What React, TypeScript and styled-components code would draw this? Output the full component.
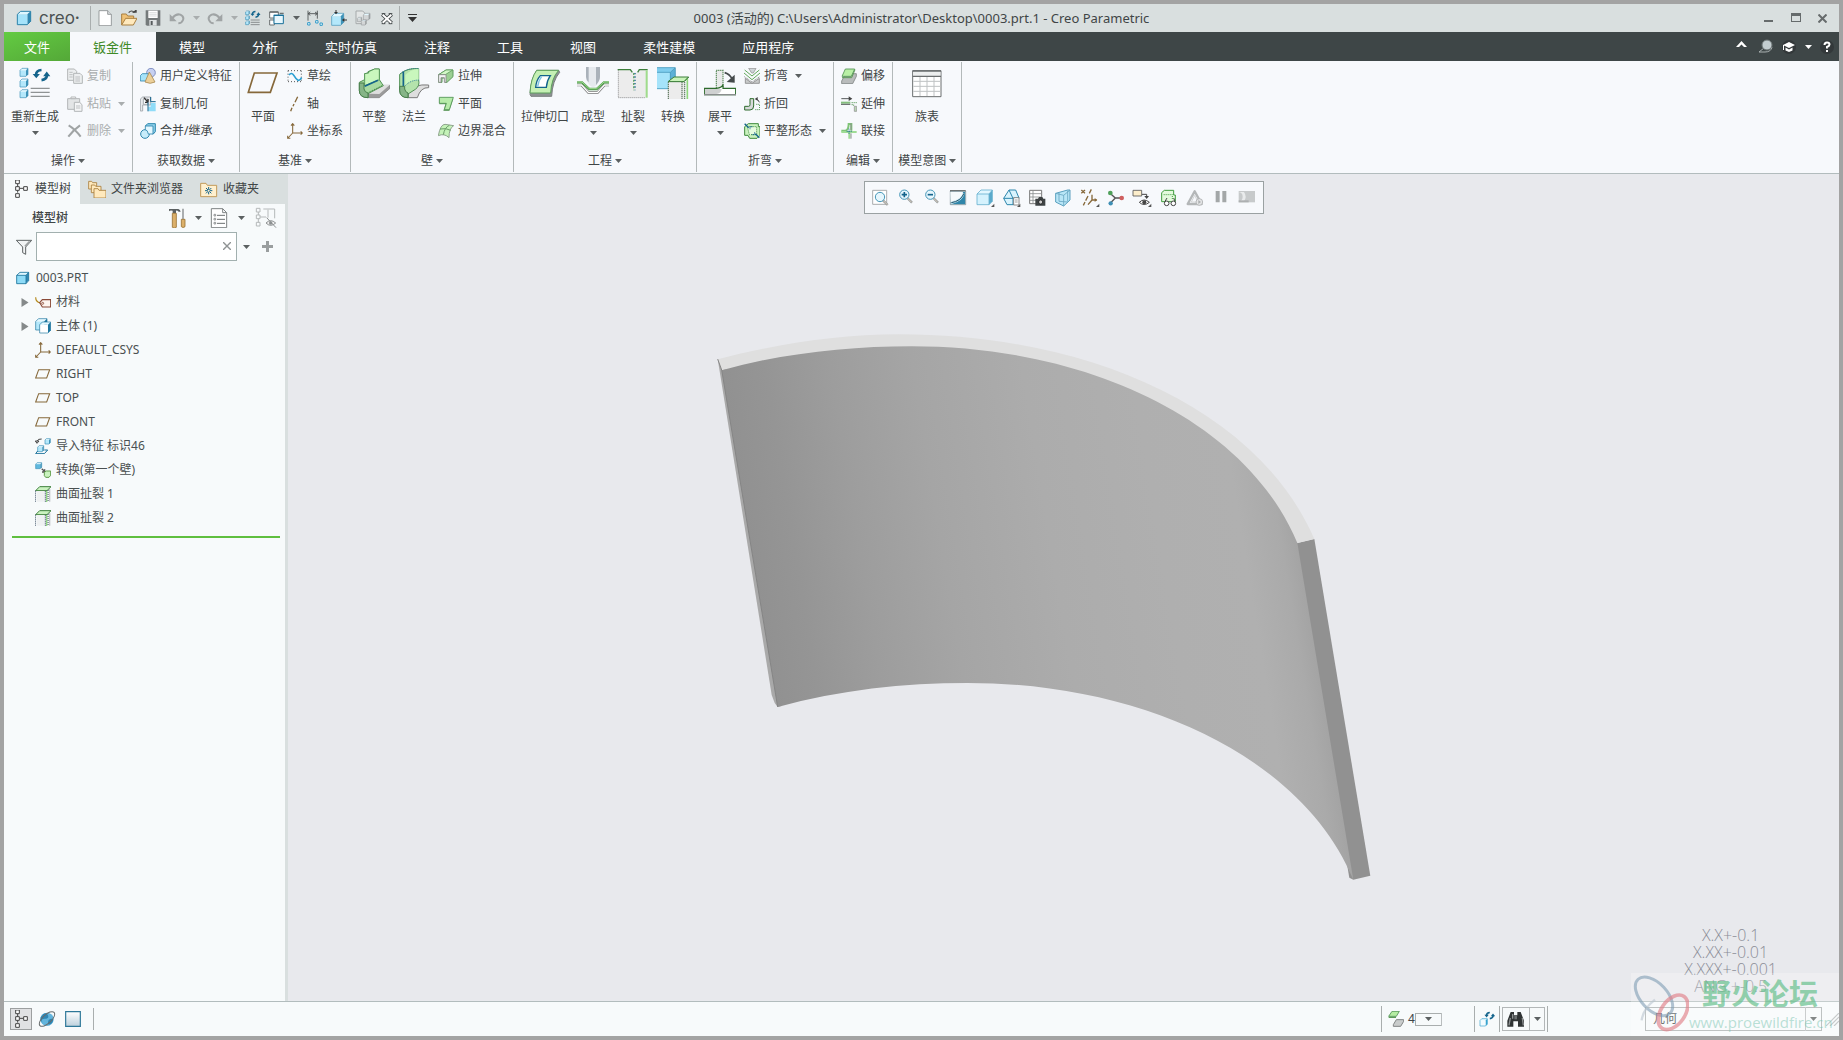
import React from "react";
import styled, { createGlobalStyle } from "styled-components";

const color = {
  frame: "#a3a3a3",
  bar: "#d9dfdf",
  dark: "#3e4647",
  panel: "#f7f9fc",
  tree: "#f7fafb",
  canvas: "#e8e9ed",
  line: "#b2bcbd",
  text: "#3f4546",
  muted: "#a9adae",
  green: "#5fbf3f",
  brown: "#86683a",
  blue: "#14648c",
  sky: "#a5e3fa",
};

const GlobalStyle = createGlobalStyle`
  *, *::before, *::after { box-sizing: border-box; }
  body { margin: 0; background: ${color.frame}; }
  button, input, select { font: inherit; color: inherit; }
`;

/* ---------- window frame ---------- */

const Window = styled.div`
  position: relative;
  display: flex;
  flex-direction: column;
  min-height: 100vh;
  border: 4px solid ${color.frame};
  background: ${color.canvas};
  color: ${color.text};
  font-family: "Noto Sans", "Noto Sans CJK SC", sans-serif;
  font-size: 12px;
  line-height: 18px;
`;

const PlainButton = styled.button`
  display: inline-flex;
  align-items: center;
  justify-content: center;
  padding: 0;
  border: 0;
  background: none;
  white-space: nowrap;
`;

const TitleBar = styled.header`
  display: grid;
  grid-template-columns: 1fr auto 1fr;
  align-items: center;
  height: 28px;
  background: ${color.bar};
`;

const QuickAccess = styled.div`
  display: flex;
  align-items: center;
`;

const Brand = styled.div`
  display: flex;
  align-items: center;
  gap: 7px;
  width: 86px;
  padding-left: 12px;
  font-family: Inter, sans-serif;
  font-size: 17px;
  color: #4c5253;
  sup {
    font-size: 8px;
    line-height: 8px;
    vertical-align: 4px;
  }
`;

const Rule = styled.span<{ $height: number }>`
  width: 1px;
  height: ${(p) => p.$height}px;
  background: #a9aeae;
`;

const QuickButton = styled(PlainButton)<{ $narrow?: boolean }>`
  width: ${(p) => (p.$narrow ? 14 : 24)}px;
  height: 24px;
`;

const QuickTools = styled.div`
  display: flex;
  align-items: center;
  padding-left: 2px;
`;

const Title = styled.h1`
  margin: 0;
  font-size: 13px;
  font-weight: 400;
  line-height: 20px;
`;

const WindowControls = styled.div`
  display: flex;
  justify-content: flex-end;
  padding-right: 3px;
`;

const ControlButton = styled(PlainButton)`
  width: 27px;
  height: 24px;
`;

/* ---------- ribbon tabs ---------- */

const TabBar = styled.nav`
  display: flex;
  height: 29px;
  background: ${color.dark};
`;

const RibbonTab = styled(PlainButton)<{ $kind?: "file" | "active" }>`
  padding: ${(p) => (p.$kind === "file" ? "0 20px" : "0 24px 0 23px")};
  font-size: 13px;
  color: ${(p) => (p.$kind === "active" ? "#3f8a27" : "#ffffff")};
  background: ${(p) =>
    p.$kind === "file"
      ? "linear-gradient(160deg, #63cb42, #54a838)"
      : p.$kind === "active"
        ? color.panel
        : "transparent"};
`;

const TabTools = styled.div`
  display: flex;
  align-items: center;
  margin-left: auto;
`;

const TabTool = styled(PlainButton)<{ $narrow?: boolean }>`
  width: ${(p) => (p.$narrow ? 14 : 24)}px;
  height: 24px;
`;

/* ---------- ribbon ---------- */

const Ribbon = styled.section`
  display: flex;
  height: 113px;
  border-bottom: 1px solid ${color.line};
  background: ${color.panel};
`;

const Group = styled.div`
  display: grid;
  grid-template-rows: 84px 1fr;
  justify-items: center;
  border-style: solid;
  border-width: 0 1px 0 0;
  border-image: linear-gradient(transparent 2px, #b3b9ba 2px, #b3b9ba 110px, transparent 110px) 1;
`;

const GroupBody = styled.div`
  display: flex;
  gap: 8px;
  padding: 0 7px;
`;

const GroupLabel = styled(PlainButton)`
  gap: 3px;
  padding: 3px 5px 0;
`;

const BigButton = styled(PlainButton)`
  flex-direction: column;
  justify-content: flex-start;
  min-width: 32px;
  padding-top: 6px;
  & > span {
    margin: 9px 0 5px;
  }
`;

const SmallColumn = styled.div`
  display: flex;
  flex-direction: column;
  padding-top: 1px;
`;

const SmallButton = styled(PlainButton)<{ $off?: boolean }>`
  justify-content: flex-start;
  gap: 4px;
  height: 28px;
  color: ${(p) => (p.$off ? color.muted : "inherit")};
  & > svg:last-child:not(:first-child) {
    margin-left: 3px;
  }
`;

/* ---------- work area ---------- */

const WorkArea = styled.main`
  display: flex;
  flex: 1;
`;

const SidePanel = styled.aside`
  display: flex;
  flex-direction: column;
  width: 284px;
  border-right: 3px solid ${color.bar};
  background: ${color.tree};
`;

const PanelTabs = styled.div`
  display: flex;
  height: 30px;
  margin-right: -3px;
  background: ${color.bar};
`;

const PanelTab = styled(PlainButton)<{ $active?: boolean }>`
  gap: 5px;
  padding: 0 9px 0 8px;
  background: ${(p) => (p.$active ? color.tree : "transparent")};
`;

const PanelHeader = styled.div`
  display: flex;
  align-items: center;
  height: 28px;
  padding: 0 4px 0 28px;
  h2 {
    flex: 1;
    margin: 0;
    font-size: 12px;
    font-weight: 500;
    line-height: 18px;
  }
`;

const PanelTool = styled(PlainButton)<{ $width: number }>`
  width: ${(p) => p.$width}px;
  height: 24px;
`;

const FilterRow = styled.div`
  display: flex;
  align-items: center;
  padding: 0 6px 0 12px;
`;

const FilterField = styled.div`
  position: relative;
  flex: 1;
  margin-left: 4px;
  input {
    display: block;
    width: 100%;
    height: 29px;
    padding: 0 24px 0 6px;
    border: 1px solid #a2b0af;
    border-radius: 0;
    background: #fff;
    outline: 0;
  }
  button {
    position: absolute;
    top: 4px;
    right: 0;
    width: 20px;
    height: 20px;
  }
`;

const TreeList = styled.ul`
  margin: 5px 5px 0 8px;
  padding: 0 0 6px;
  border-bottom: 2px solid ${color.green};
  list-style: none;
`;

const TreeRow = styled.li<{ $root?: boolean }>`
  display: grid;
  grid-template-columns: ${(p) => (p.$root ? "16px 1fr" : "9px 16px 1fr")};
  column-gap: ${(p) => (p.$root ? 4 : 5)}px;
  align-items: center;
  height: 24px;
  padding-left: ${(p) => (p.$root ? 4 : 9)}px;
  color: #4a5051;
`;

const Viewport = styled.section`
  position: relative;
  display: flex;
  flex: 1;
  flex-direction: column;
  align-items: center;
`;

const ModelSvg = styled.svg`
  position: absolute;
  inset: 0;
  width: 100%;
  height: 100%;
`;

const ViewToolbar = styled.div`
  position: relative;
  display: grid;
  grid-template-columns: repeat(15, 1fr);
  width: 400px;
  height: 33px;
  margin-top: 7px;
  padding: 0 2px;
  border: 1px solid #9aa1a2;
  background: ${color.panel};
`;

const Tolerances = styled.div`
  position: absolute;
  right: 62px;
  bottom: 6px;
  color: #8b8d97;
  font-family: "Open Sans", sans-serif;
  font-size: 16px;
  font-weight: 300;
  line-height: 17px;
  text-align: center;
`;

/* ---------- status bar ---------- */

const StatusBar = styled.footer`
  display: flex;
  align-items: center;
  justify-content: space-between;
  height: 35px;
  border-top: 1px solid ${color.line};
  background: ${color.tree};
`;

const StatusGroup = styled.div`
  display: flex;
  align-items: center;
`;

const StatusCell = styled.div<{ $width: number }>`
  display: flex;
  align-items: center;
  width: ${(p) => p.$width}px;
  height: 26px;
  padding-left: ${(p) => (p.$width > 30 ? 6 : 4)}px;
  border-left: 1px solid #a9aeae;
`;

const ViewSwitch = styled(PlainButton)<{ $pressed?: boolean }>`
  width: 22px;
  height: 22px;
  border: ${(p) => (p.$pressed ? "1px solid #9c9fa0" : "0")};
  background: ${(p) => (p.$pressed ? "#e0e1e3" : "none")};
`;

const ViewSwitches = styled.div`
  display: flex;
  gap: 4px;
  padding: 0 9px 0 6px;
`;

const CountLabel = styled.label`
  display: flex;
  align-items: center;
  padding-left: 4px;
`;

const SelectBox = styled.span<{ $width: number; $height: number; $arrow?: number }>`
  position: relative;
  width: ${(p) => p.$width}px;
  height: ${(p) => p.$height}px;
  select {
    display: block;
    width: 100%;
    height: 100%;
    padding: 0 7px;
    border: 1px solid #a9aeae;
    border-radius: 0;
    background: transparent;
    appearance: none;
  }
  svg {
    position: absolute;
    top: calc(50% - 2px);
    right: ${(p) => (p.$arrow ? 5 : 10)}px;
    pointer-events: none;
  }
  &::after {
    content: "";
    position: absolute;
    top: 0;
    right: ${(p) => p.$arrow ?? 0}px;
    height: 100%;
    border-left: 1px solid #b9bdbe;
    pointer-events: none;
  }
`;

const SplitButton = styled.div`
  display: flex;
  height: 24px;
  margin: 0 2px;
  border: 1px solid #b3b7b8;
  button:first-child {
    width: 27px;
    border-right: 1px solid #b3b7b8;
  }
  button:last-child {
    width: 14px;
  }
`;

const SelectionFilter = styled.div`
  display: flex;
  align-items: center;
  gap: 4px;
  margin-left: 97px;
`;

/* ---------- watermark ---------- */

const Watermark = styled.div`
  position: absolute;
  right: 0;
  bottom: 0;
  display: flex;
  width: 208px;
  height: 63px;
  background: rgba(255, 255, 255, 0.25);
  pointer-events: none;
`;

const WatermarkText = styled.div`
  display: flex;
  flex-direction: column;
  strong {
    padding-left: 13px;
    color: rgba(95, 190, 135, 0.66);
    font-size: 29px;
    font-weight: 700;
    line-height: 42px;
  }
  span {
    color: rgba(120, 195, 175, 0.5);
    font-family: "Open Sans", sans-serif;
    font-size: 15px;
    line-height: 14px;
  }
`;

/* ---------- drawings ---------- */

type IconProps = { box: string; w?: number; children: React.ReactNode };

const Icon = ({ box, w = 16, children }: IconProps) => (
  <svg width={w} height={w} viewBox={box} fill="none" aria-hidden="true">
    {children}
  </svg>
);

const Caret = ({ fill = "#5b6061" }: { fill?: string }) => (
  <svg width="7" height="4" viewBox="0 0 7 4" aria-hidden="true">
    <path d="M0 0h7L3.500 4z" fill={fill} />
  </svg>
);

/* A small extruded cube; the unit is a third of a pixel. */
const Cube = ({ x, y, s, face = "#b4e8fb", edge = "#3e93b8" }: { x: number; y: number; s: number; face?: string; edge?: string }) => {
  const d = s * 0.25;
  const f = s - d;
  return (
    <g>
      <path d={`M${x} ${y + d}l${d} ${-d}h${f}l${-d} ${d}z`} fill="#e4f8ff" />
      <path d={`M${x + f} ${y + d}l${d} ${-d}v${f}l${-d} ${d}z`} fill={edge} />
      <path d={`M${x} ${y + d}h${f}v${f}h${-f}z`} fill={face} />
      <path d={`M${x} ${y + d}l${d} ${-d}h${f}v${f}l${-d} ${d}h${-f}z`} stroke={edge} strokeWidth="2" />
    </g>
  );
};

const CycleArrows = ({ x, y, s = 1 }: { x: number; y: number; s?: number }) => (
  <g transform={`translate(${x} ${y}) scale(${s})`}>
    <path d="M7 19Q8 5 24 4" stroke={color.blue} strokeWidth="8" />
    <path d="M41 19Q40 33 24 35" stroke={color.blue} strokeWidth="8" />
    <path d="M-3 16h22L8 29zM29 23h22L40 9z" fill={color.blue} />
  </g>
);

const IconLogo = () => (
  <Icon box="48 30 48 48">
    <path d="M52 43l10-9h30l-10 9z" fill="#dff7ff" />
    <path d="M82 43l10-9v30l-10 10z" fill="#3188b2" />
    <path d="M52 43h30v31H52z" fill={color.sky} />
    <path d="M52 43l10-9h30v30l-10 10H52z" stroke="#2b82aa" strokeWidth="3" />
  </Icon>
);
const IconNew = () => (
  <Icon box="292 30 48 48">
    <path d="M298 32h26l11 11v34h-37z" fill="#fff" stroke="#8b9091" strokeWidth="2.6" />
    <path d="M324 32v11h11" fill="#d8dcdd" stroke="#8b9091" strokeWidth="2.6" />
  </Icon>
);
const IconOpen = () => (
  <Icon box="363 30 48 48">
    <path d="M365 75V42h14l4 6h18v12" fill="#f0c277" stroke="#a97f3f" strokeWidth="3" />
    <path d="M365 75l12-20h34l-11 20z" fill="#ffe9bd" stroke="#a97f3f" strokeWidth="3" />
    <path d="M386 38q9-10 17 0" stroke="#444" strokeWidth="3.5" />
    <path d="M396 38h14v-11z" fill="#444" />
  </Icon>
);
const IconSave = () => (
  <Icon box="437 30 48 48">
    <path d="M439 31h44v46h-41l-3-4z" fill="#757a7b" />
    <path d="M447 32h28v22h-28z" fill="#fff" />
    <path d="M450 38h22M450 43h22M450 48h22" stroke="#c9cccd" strokeWidth="2" />
    <path d="M450 60h22v17h-22z" fill="#dfe2e3" />
    <path d="M454 63h6v12h-6z" fill="#565b5c" />
  </Icon>
);
const IconUndo = ({ flip }: { flip?: boolean }) => (
  <Icon box="0 0 48 48">
    <g transform={flip ? "matrix(-1 0 0 1 48 0)" : undefined}>
      <path d="M10 24q12-14 24-10 12 6 8 16-4 10-14 10" stroke="#a0a4a5" strokeWidth="6" />
      <path d="M2 12v22h21z" fill="#a0a4a5" />
    </g>
  </Icon>
);
const IconRegenSmall = () => (
  <Icon box="734 30 48 48">
    <Cube x={736} y={33} s={11} />
    <Cube x={736} y={48} s={11} />
    <Cube x={736} y={63} s={11} />
    <CycleArrows x={752} y={32} s={0.56} />
    <path d="M751 60h27M751 67h27M751 74h27" stroke="#8a8f90" strokeWidth="3" />
  </Icon>
);
const IconWindows = () => (
  <Icon box="806 30 48 48">
    <path d="M808 36h26v18h-26zM808 60h14v15h-14z" fill="#fff" stroke="#6b7071" strokeWidth="3" />
    <path d="M808 36h26M838 40h12" stroke="#6b7071" strokeWidth="4" />
    <path d="M821 46h28v25h-28z" fill="#e8f7fd" stroke="#19709a" strokeWidth="3" />
    <path d="M820 46h30" stroke="#19709a" strokeWidth="4" />
  </Icon>
);
const IconDimension = () => (
  <Icon box="920 30 48 48">
    <path d="M923 32v30M951 32v24M923 41h28M923 41l7-5M923 41l7 5M951 41l-7-5M951 41l-7 5" stroke="#4a4f50" strokeWidth="2.6" />
    <path d="M922 68h7v7h-7zM946 62h7v7h-7zM959 69h7v7h-7z" stroke="#2f9ac8" strokeWidth="3" fill="#fff" />
  </Icon>
);
const IconCubeArrows = () => (
  <Icon box="993 30 48 48">
    <Cube x={995} y={40} s={36} />
    <path d="M1008 28v10M1041 60h-12" stroke="#333" strokeWidth="3" />
    <path d="M1002 36h12l-6 7zM1033 54v12l-7-6z" fill="#333" />
  </Icon>
);
const IconCopyFeature = () => (
  <Icon box="1065 30 48 48">
    <path d="M1068 33h20l6 6v32h-26z" fill="#e3e6e6" stroke="#a5a9aa" strokeWidth="3" />
    <Cube x={1090} y={40} s={20} face="#d3d6d7" edge="#9a9fa0" />
    <Cube x={1072} y={52} s={13} face="#d3d6d7" edge="#9a9fa0" />
    <Cube x={1084} y={60} s={15} face="#d3d6d7" edge="#9a9fa0" />
  </Icon>
);
const IconCloseWindow = () => (
  <Icon box="1138 30 48 48">
    <path d="M1148 43l28 26M1176 43l-28 26" stroke="#3f4546" strokeWidth="11" />
    <path d="M1146 41h11M1167 41h11M1146 71h11M1167 71h11" stroke="#3f4546" strokeWidth="3" />
    <path d="M1149 44l26 24M1175 44l-26 24" stroke="#fff" strokeWidth="6" />
  </Icon>
);
const IconCustomize = () => (
  <svg width="9" height="8" viewBox="0 0 9 8" aria-hidden="true">
    <path d="M0 0h9v1H0zM0 3h9L4.500 8z" fill="#333" />
  </svg>
);

/* big ribbon icons */
const IconRegen = () => (
  <Icon w={32} box="58 200 96 96">
    <Cube x={61} y={204} s={24} />
    <Cube x={61} y={236} s={24} />
    <Cube x={61} y={268} s={24} />
    <CycleArrows x={102} y={205} s={0.98} />
    <path d="M93 264h57M93 276h57M93 288h57" stroke="#8f9394" strokeWidth="4" />
  </Icon>
);
const IconPlaneBig = () => (
  <Icon w={32} box="741 200 96 96">
    <path d="M745 276l18-58h68l-20 58z" stroke={color.brown} strokeWidth="5" />
  </Icon>
);
const IconFlat = () => (
  <Icon w={32} box="54 36 96 96">
    <path d="M84 118l46-27h20v9l-32 28H84z" fill="#9b9b9b" stroke="#7c7c7c" strokeWidth="2" />
    <path d="M84 116l44-26h21l-31 27z" fill="#dedede" />
    <path d="M58 82l16-8v-18l10-2V50l20-8h14v32L130 92 84 116v12q-26 0-26-22z" fill="#a9dba2" stroke="#4f9153" strokeWidth="3" />
    <path d="M74 56l12-2V50l18-8h14v32l-44 18z" fill="#c9f7bd" stroke="#4f9153" strokeWidth="2.500" />
    <path d="M58 84h14v18q2 10 12 12v14q-26 0-26-22z" fill="#86b587" stroke="#4a7f4d" strokeWidth="3" />
    <path d="M74 94l40-18" stroke={color.blue} strokeWidth="5" />
    <path d="M86 112l40-20" stroke="#3c8240" strokeWidth="3" strokeDasharray="3 3" />
  </Icon>
);
const IconFlange = () => (
  <Icon w={32} box="174 36 96 96">
    <path d="M204 112q18-26 62-22v8q-24-2-34 30h-28z" fill="#dedede" stroke="#7c7c7c" strokeWidth="3" />
    <path d="M179 58q22-20 57-17v34q4 18-10 28l-22 14v11q-25 0-25-24z" fill="#b4e3ac" stroke="#4f9153" strokeWidth="3" />
    <path d="M196 60q14-16 40-19v34q-26 0-40 16z" fill="#c9f7bd" />
    <path d="M181 56q22-18 55-15M196 92q14-16 40-17" stroke="#2c7a9c" strokeWidth="3" strokeDasharray="3 3" />
    <path d="M190 50v46" stroke={color.blue} strokeWidth="5" />
    <path d="M179 94h15v8q2 10 10 12v14q-25 0-25-22z" fill="#86b587" stroke="#4a7f4d" strokeWidth="3" />
  </Icon>
);
const IconCut = () => (
  <Icon w={32} box="567 36 96 96">
    <path d="M570 118q2-46 20-72h66l3 6q-22 26-24 72h-62z" fill="#8d9292" stroke="#7b8080" strokeWidth="3" />
    <path d="M570 114q2-44 20-68h66q-22 24-24 68z" fill="#c5f0b4" stroke="#5da05c" strokeWidth="3" />
    <path d="M587 97q2-22 14-35h30q-10 14-12 35z" fill="#fff" stroke={color.blue} strokeWidth="4" />
    <path d="M593 95q2-18 12-30" stroke="#7fc6e4" strokeWidth="4" />
  </Icon>
);
const IconForm = () => (
  <Icon w={32} box="711 36 96 96">
    <path d="M738 36h42v30q0 12-10 24-11 12-22 0-10-12-10-24z" fill="#e6eaee" />
    <path d="M738 36h8v46q-8-8-8-16zM768 36h12v30q0 10-12 24z" fill="#aab2ba" />
    <path d="M711 90h14l20 22h28l20-22h14" stroke="#777" strokeWidth="8" />
    <path d="M711 90h14l20 22h28l20-22h14" stroke="#fff" strokeWidth="4" />
    <path d="M711 82h15l22 20h22l22-20h15" stroke="#4e9a4a" strokeWidth="7" />
    <path d="M711 81h15l22 20h22l22-20h15" stroke="#a4dd94" strokeWidth="3" />
  </Icon>
);
const IconRip = () => (
  <Icon w={32} box="831 36 96 96">
    <path d="M835 44h40v8h20v-8h28v84h-88z" fill="#ececec" />
    <path d="M835 44v84h80" stroke="#8a8a8a" strokeWidth="3" strokeDasharray="3 3" />
    <path d="M833 44h38l6 8M893 52l5-8h25" stroke="#3d7f3b" strokeWidth="4" />
    <path d="M920 46v82" stroke="#9fdc8c" strokeWidth="6" />
    <path d="M881 54v52" stroke="#69a867" strokeWidth="4" strokeDasharray="6 4" />
    <path d="M885 54v52" stroke={color.blue} strokeWidth="4" strokeDasharray="4 6" />
  </Icon>
);
const IconConvert = () => (
  <Icon w={32} box="951 36 96 96">
    <path d="M951 38h54l-14 14h-40z" fill="#7fcdee" />
    <path d="M991 52l15-14v45l-15 18z" fill="#5cb0d6" stroke="#2d86ad" strokeWidth="2" />
    <path d="M951 52h40v49h-40z" fill={color.sky} />
    <path d="M951 38h54M951 52h40v49h-40" stroke="#3f97bd" strokeWidth="2.500" />
    <path d="M984 80l18-14h44l-14 14z" fill="#c9f3ba" stroke="#3d7f3b" strokeWidth="3" />
    <path d="M984 80h50v52h-50z" fill="#ececec" />
    <path d="M985 80v52M1026 82v50M1034 82v50" stroke="#2f4f30" strokeWidth="3.500" strokeDasharray="3 3" />
    <path d="M1042 70v62" stroke="#8fd67c" strokeWidth="5" />
    <path d="M984 80h48l14-14" stroke="#3d7f3b" strokeWidth="3" />
  </Icon>
);
const IconUnbend = () => (
  <Icon w={32} box="72 201 96 96">
    <path d="M109 265v-54h20v54" fill="#e9eaea" stroke="#2e6b2d" strokeWidth="3.500" strokeDasharray="3 3" />
    <path d="M73 265h36q18-2 20-12v12h38v19H73z" fill="#fff" stroke="#2e6b2d" strokeWidth="3.500" />
    <path d="M75 267h50q-2 14-16 15H75z" fill="#cfd1d1" />
    <path d="M72 284h96" stroke="#8a8e8e" strokeWidth="4" />
    <path d="M134 218q14 4 22 18" stroke="#444a4b" strokeWidth="5" />
    <path d="M164 224v24l-24-2z" fill="#444a4b" />
  </Icon>
);
const IconFamilyTable = () => (
  <Icon w={32} box="695 201 96 96">
    <path d="M700 212h85v78h-85z" fill="#fff" stroke="#6a6e6f" strokeWidth="3" />
    <path d="M702 216h81v12h-81z" fill="#eceeee" />
    <path d="M722 230v58M743 230v58M764 230v58M702 244h81M702 259h81M702 274h81" stroke="#bfc2c3" strokeWidth="3" />
    <path d="M700 213h85M700 229h85" stroke="#6a6e6f" strokeWidth="4" />
  </Icon>
);

/* small ribbon icons */
const IconCopy = () => (
  <Icon box="201 201 48 48">
    <g fill="#eceeef" stroke="#b3b6b7" strokeWidth="3">
      <path d="M203 204h20l7 7v27h-27z" />
      <path d="M221 217h19l7 7v23h-26z" />
    </g>
    <path d="M208 214h10M208 221h10M208 228h10M226 228h14M226 234h14M226 240h14" stroke="#b3b6b7" strokeWidth="2.500" />
  </Icon>
);
const IconPaste = () => (
  <Icon box="201 285 48 48">
    <path d="M203 293h36v32h-36z" fill="#e3e5e6" stroke="#b3b6b7" strokeWidth="3" />
    <path d="M213 293v-5h14v5z" fill="#fff" stroke="#b3b6b7" strokeWidth="3" />
    <path d="M223 304h16l7 7v20h-23z" fill="#f4f5f6" stroke="#b3b6b7" strokeWidth="3" />
    <path d="M228 315h13M228 321h13" stroke="#b3b6b7" strokeWidth="2.500" />
  </Icon>
);
const IconDelete = () => (
  <Icon box="201 369 48 48">
    <path d="M206 376q20 12 36 34M240 376q-20 14-35 34" stroke="#a0a4a5" strokeWidth="6" />
  </Icon>
);
const IconUserFeature = () => (
  <Icon box="420 201 48 48">
    <circle cx="453" cy="215" r="13" fill="#c6d0f2" stroke="#7182b8" strokeWidth="2.500" />
    <path d="M421 224l6-6h18v22h-24z" fill={color.sky} stroke="#3388ae" strokeWidth="2.500" />
    <path d="M448 213l17 30q-14 8-30 0z" fill="#ecd09a" stroke="#a98c54" strokeWidth="2.500" />
  </Icon>
);
const IconCopyGeometry = () => (
  <Icon box="420 285 48 48">
    <path d="M421 294l7-6h24v24h-24v18h-7z" fill="#e9ebee" stroke="#9ba1a6" strokeWidth="2.500" />
    <path d="M430 294h14v16h-14z" fill="#f8fafb" stroke="#9ba1a6" strokeWidth="2.500" />
    <path d="M432 290l12 14M444 304v-10M444 304h-9" stroke="#333" strokeWidth="4" />
    <path d="M452 306h15v25h-22v-14h7z" fill="#8fdcf8" />
    <path d="M444 304v27M452 288v14h15" stroke={color.blue} strokeWidth="3" />
  </Icon>
);
const IconMerge = () => (
  <Icon box="420 369 48 48">
    <path d="M436 378l7-7h23v24l-7 8" fill="#8fd0ea" stroke="#2d86ad" strokeWidth="3" />
    <circle cx="435" cy="402" r="13" fill="#c7ecfa" stroke="#2d86ad" strokeWidth="3" />
    <path d="M436 378h23v24h-14q-2-12-9-13z" fill="#e3f7ff" stroke="#2d86ad" strokeWidth="2.500" />
  </Icon>
);
const IconSketch = () => (
  <Icon box="861 201 48 48">
    <path d="M864 209h42M864 242h42M864 209v34M904 209v34" stroke="#555" strokeWidth="3" strokeDasharray="3 6" />
    <path d="M867 222q8-10 15 2t12 14 11-8" stroke="#2a9fd2" strokeWidth="5" />
  </Icon>
);
const IconAxis = () => (
  <Icon box="861 285 48 48">
    <path d="M893 287l-8 17M882 309l-3 7M876 320l-4 11" stroke={color.brown} strokeWidth="4" />
  </Icon>
);
const IconCsys = () => (
  <Icon box="0 0 48 48">
    <path d="M17 3v27h29M17 30L3 45M12 8l5-6 5 6M41 25l5 5-5 5M2 38v8h8" stroke={color.brown} strokeWidth="3.200" />
  </Icon>
);
const IconExtrude = () => (
  <Icon box="294 36 48 48">
    <path d="M296 56l22-14h21v20l-18 17h-6V66h-9v13h-10z" fill="#9bcf93" stroke="#5f9c5e" strokeWidth="3" />
    <path d="M296 56h20l22-14h-20z" fill="#d3f8c8" stroke="#5f9c5e" strokeWidth="2.500" />
    <path d="M296 56h22v23h-5V65h-10v14h-7z" fill="#f3f4f4" stroke="#888" strokeWidth="2.500" />
  </Icon>
);
const IconPlanar = () => (
  <Icon box="294 120 48 48">
    <path d="M298 128h42l-12 37h-18l6-20h-18z" fill="#76a873" />
    <path d="M298 124h42l-12 37h-15l6-19h-21z" fill="#b7ecaa" stroke="#4f9153" strokeWidth="2.500" />
  </Icon>
);
const IconBlend = () => (
  <Icon box="294 204 48 48">
    <path d="M295 242q6-34 20-34l26 4q-14 8-14 36-14-14-32-6z" fill="#c4f2b8" stroke="#8fa48e" strokeWidth="3" />
    <path d="M328 211q-14 6-18 28M300 222q18-4 32 4" stroke="#6b9e69" strokeWidth="3" />
  </Icon>
);
const IconBend = () => (
  <Icon box="192 201 48 48">
    <path d="M196 232l20 15 22-15v15h-42z" fill="#c9cbcb" stroke="#888" strokeWidth="2.500" />
    <path d="M206 202h22l-8 14h-5z" fill="#cfd5d8" stroke="#999" strokeWidth="2.500" />
    <path d="M192 216l24 20 24-20M194 207l22 18 22-18" stroke="#62a75a" strokeWidth="3" />
    <path d="M193 227l23 16 23-16" stroke="#777" strokeWidth="2.500" strokeDasharray="3 2" />
  </Icon>
);
const IconBendBack = () => (
  <Icon box="192 285 48 48">
    <path d="M194 316h12q4 0 4-5v-18h11v22q0 12-11 12h-16z" fill="#d7dada" stroke="#2e6b2d" strokeWidth="3" />
    <path d="M226 326h13v-16h-11" stroke="#3f8a3d" strokeWidth="3" strokeDasharray="3 3" />
    <path d="M238 304q-2-8-10-10" stroke="#444" strokeWidth="3" />
    <path d="M224 294l9-6v11z" fill="#444" />
  </Icon>
);
const IconFlatState = () => (
  <Icon box="192 369 48 48">
    <path d="M205 371h30v9h5v26l-9 9h-22l-5-9h-10v-26z" fill="#caf2bf" stroke="#3f8a3d" strokeWidth="3" />
    <path d="M202 380h28v24h-22z" fill="#e6fbe0" stroke="#3f8a3d" strokeWidth="3" strokeDasharray="3 3" />
    <path d="M194 371l12 12M238 413l-12-12" stroke={color.blue} strokeWidth="4" />
    <path d="M210 388v-8h8M224 396v8h-8" stroke={color.blue} strokeWidth="2" />
  </Icon>
);
const IconOffset = () => (
  <Icon box="483 201 48 48">
    <path d="M485 240l12-22h32v8l-11 22h-33z" fill="#b9bcbc" stroke="#808484" strokeWidth="2.500" />
    <path d="M486 230h29l10-24" stroke="#5d9a58" strokeWidth="3" />
    <path d="M486 226l10-22h28l-10 22z" fill="#b9f0a6" stroke="#4f9153" strokeWidth="2.500" />
  </Icon>
);
const IconExtend = () => (
  <Icon box="483 285 48 48">
    <path d="M483 305h28" stroke="#83be7d" strokeWidth="6" />
    <path d="M483 310h28M484 293h24" stroke="#555a5b" strokeWidth="3" />
    <path d="M506 286l11 7-11 7z" fill="#444" />
    <path d="M515 305h15M515 311h6M521 311v5" stroke="#3f8a3d" strokeWidth="3" strokeDasharray="3 3" />
    <path d="M523 316h7v15h-7z" fill="#b9d9b4" stroke="#999" strokeWidth="2.500" />
  </Icon>
);
const IconJoin = () => (
  <Icon box="483 369 48 48">
    <path d="M484 392h12q10-2 10-20h8v20" stroke="#7fc477" strokeWidth="6" />
    <path d="M484 396h46M508 398v18" stroke="#9fdc95" strokeWidth="6" />
    <path d="M500 394h16M507 386v16" stroke={color.blue} strokeWidth="3" strokeDasharray="3 3" />
    <path d="M513 370v20M513 400v16" stroke="#8a8e8e" strokeWidth="3" />
  </Icon>
);

/* panel icons */
const IconTree = () => (
  <Icon w={18} box="36 30 54 54">
    <path d="M53 42v26M58 55h12" stroke="#444" strokeWidth="3" />
    <path d="M47 30h11v11H47zM47 50h11v11H47zM47 71h11v11H47zM71 50h11v11H71z" fill="#fff" stroke="#444" strokeWidth="3" />
  </Icon>
);
const IconFolders = () => (
  <Icon w={18} box="264 30 54 54">
    <g fill="#ffe9bd" stroke="#a97f3f" strokeWidth="2.600">
      <path d="M266 34h9l3 4h12v19h-24z" />
      <path d="M274 45h10l3 4h16v19h-29z" />
      <path d="M282 56h12l3 5h21v23h-36z" />
    </g>
  </Icon>
);
const IconFavorite = () => (
  <Icon w={18} box="600 30 54 54">
    <path d="M602 40h16l4 6h28v34h-48z" fill="#fff0cf" stroke="#c29a5a" strokeWidth="3" />
    <path d="M626 51v22M615 62h22M618 54l16 16M634 54l-16 16" stroke={color.blue} strokeWidth="3" />
    <circle cx="626" cy="62" r="3" fill="#fff0cf" />
  </Icon>
);
const IconTools = () => (
  <Icon w={20} box="498 114 60 60">
    <path d="M504 117h28q6 2 7 8h-6q-4-4-8-3v8h-10v-8q-8-2-11 2z" fill="#5b6061" />
    <path d="M514 130h12v42q-6 4-12 0z" fill="#dcb06a" stroke="#9a7335" strokeWidth="2.500" />
    <path d="M546 116v32" stroke="#85898a" strokeWidth="4" />
    <path d="M541 148h11v22q-6 5-11 0z" fill="#dcb06a" stroke="#9a7335" strokeWidth="2.500" />
  </Icon>
);
const IconSettings = () => (
  <Icon w={20} box="628 114 60 60">
    <path d="M635 116h34l12 12v45h-46z" fill="#fff" stroke="#7d8283" strokeWidth="3" />
    <path d="M669 116v12h12" stroke="#7d8283" strokeWidth="3" />
    <path d="M652 136h24M652 148h24M652 160h24" stroke="#6b7071" strokeWidth="3" />
    <path d="M643 133h5v5h-5zM643 145h5v5h-5zM643 157h5v5h-5z" stroke="#6b7071" strokeWidth="2" />
  </Icon>
);
const IconTreeHide = () => (
  <Icon w={22} box="765 112 66 66">
    <g stroke="#b5b9ba" strokeWidth="3">
      <path d="M769 116h11v11h-11zM769 136h11v11h-11zM769 158h11v11h-11zM775 127v9M775 147v11M780 142h18M790 118h34v28M804 120v24" />
    </g>
    <path d="M798 160q14-14 29 0-15 14-29 0z" fill="#eee" stroke="#8d9192" strokeWidth="3" />
    <circle cx="812" cy="160" r="5" fill="#8d9192" />
    <path d="M800 144l28 30" stroke="#8d9192" strokeWidth="3" />
  </Icon>
);
const IconFunnel = () => (
  <Icon box="48 204 48 48">
    <path d="M49 208h46L77 228v22l-9-5v-17z" fill="#f1f3f4" stroke="#5e6364" strokeWidth="3" />
    <path d="M75 226l14-15" stroke="#9da1a2" strokeWidth="5" />
  </Icon>
);
const IconClear = () => (
  <svg width="8" height="8" viewBox="0 0 8 8" aria-hidden="true">
    <path d="M0 0l8 8M8 0L0 8" stroke="#8f9394" strokeWidth="1.400" />
  </svg>
);
const IconPlus = () => (
  <svg width="11" height="11" viewBox="0 0 11 11" aria-hidden="true">
    <path d="M4 0h3v4h4v3H7v4H4V7H0V4h4z" fill="#9a9e9f" />
  </svg>
);
const IconExpand = () => (
  <svg width="8" height="9" viewBox="0 0 8 9" aria-hidden="true">
    <path d="M0.500 0l7 4.500-7 4.500z" fill="#85898a" />
  </svg>
);
const IconPart = () => (
  <Icon box="48 300 48 48">
    <path d="M50 316l10-9h25l-7 9z" fill="#dff7ff" />
    <path d="M78 316l8-9v24l-8 9z" fill="#3188b2" />
    <path d="M50 316h28v25H50z" fill="#8edbf7" />
    <path d="M50 316l10-9h26v25l-8 9H50zM50 316h28v25M78 316l8-9" stroke="#1c759e" strokeWidth="2.600" />
  </Icon>
);
const IconMaterial = () => (
  <Icon box="105 372 48 48">
    <path d="M107 382q0 14 14 17" stroke="#b58a1d" strokeWidth="3.500" />
    <path d="M119 398l8-9h25v22h-25z" fill="#fdf5ef" stroke="#8a4a38" strokeWidth="3.500" />
    <circle cx="128" cy="400" r="3" stroke="#8a4a38" strokeWidth="2.500" />
  </Icon>
);
const IconBodies = () => (
  <Icon box="105 444 48 48">
    <Cube x={107} y={446} s={34} edge="#1c759e" />
    <Cube x={119} y={456} s={33} face="#fff" edge="#1c759e" />
  </Icon>
);
const IconPlaneSmall = () => (
  <Icon box="105 78 48 48">
    <path d="M107 114l9-25h33l-9 25z" stroke={color.brown} strokeWidth="3.200" />
  </Icon>
);
const IconImport = () => (
  <Icon box="105 294 48 48">
    <path d="M111 304q2-8 14-7M106 303h11l-6 7z" stroke="#444" strokeWidth="3" />
    <Cube x={135} y={296} s={16} />
    <Cube x={113} y={317} s={18} />
    <path d="M107 341l6-8M107 341h26l10-11h-10" stroke="#19709a" strokeWidth="3" />
  </Icon>
);
const IconConvertSmall = () => (
  <Icon box="105 366 48 48">
    <Cube x={107} y={368} s={18} face="#5fb9df" />
    <path d="M125 386l8 7M134 388v8h-8" stroke="#555" strokeWidth="4" />
    <path d="M133 397l6-4h13v13l-5 6h-10l-4-5z" fill="#caf2bf" stroke="#5f9c4a" strokeWidth="3" />
  </Icon>
);
const IconSurfaceRip = () => (
  <Icon box="105 438 48 48">
    <path d="M107 452l12-12h34l-12 12z" fill="#caf2bf" stroke="#3d7f3b" strokeWidth="3" />
    <path d="M110 453h24v32h-24z" fill="#eff1f2" />
    <path d="M106 452v34M136 454v32M144 450v36" stroke="#22364f" strokeWidth="3" strokeDasharray="3 3" />
    <path d="M140 453v33" stroke="#93d684" strokeWidth="4" />
    <path d="M149 447v38" stroke="#c4c7c9" strokeWidth="4" />
  </Icon>
);

/* canvas toolbar icons, drawn in a 60-unit box */
const Lens = ({ cx, cy, sign }: { cx: number; cy: number; sign?: string }) => (
  <>
    <path d={`M${cx + 9} ${cy + 10}l14 14`} stroke="#9a9e9f" strokeWidth="7" />
    <path d={`M${cx + 10} ${cy + 11}l12 12`} stroke="#d9cfbf" strokeWidth="3" />
    <circle cx={cx} cy={cy} r="14" fill="#e6f6fd" stroke="#4596b8" strokeWidth="3" />
    {sign && <path d={sign} stroke={color.blue} strokeWidth="5" />}
  </>
);
const Corner = () => <path d="M58 47v10H48z" fill="#555" />;

const viewTools: [string, React.ReactNode][] = [
  ["重新调整", <><path d="M8 7h42v42H8z" fill="#fff" stroke="#9a9e9f" strokeWidth="2.500" /><Lens cx={30} cy={27} /></>],
  ["放大", <Lens cx={25} cy={20} sign="M25 12v16M17 20h16" />],
  ["缩小", <Lens cx={25} cy={20} sign="M17 20h16" />],
  ["重画", <><path d="M7 9h46v41H7z" fill="#c5e3ef" stroke="#7d9299" strokeWidth="2.500" /><path d="M34 12h17v36H12q32-8 38-32z" fill="#2f86aa" /><path d="M7 12h38q0 20-37 30z" fill="#f5fafc" /><path d="M10 44q28-4 38-28" stroke="#174f68" strokeWidth="3" /><path d="M6 8h47" stroke="#6d7374" strokeWidth="4" /></>],
  ["显示样式", <><path d="M6 18L18 6h34L42 18z" fill="#e2f7ff" /><path d="M42 18L52 6v34L42 50z" fill="#5aa9cb" /><path d="M6 18h36v32H6z" fill="#d5f2fd" /><path d="M6 18L18 6h34v34L42 50H6zM6 18h36v32M42 18L52 6" stroke="#69b2d0" strokeWidth="2.500" /><Corner /></>],
  ["已保存方向", <><path d="M8 31L24 6h20l10 24-16 20H18z" fill="#d9f3fd" stroke="#2d86ad" strokeWidth="3" /><path d="M8 31h28l18-1M36 31L24 6M36 31v19" stroke="#2d86ad" strokeWidth="3" /><path d="M38 29h16v22H38z" fill="#fff" stroke="#777" strokeWidth="2.500" /><path d="M42 36h8M42 42h8" stroke="#777" strokeWidth="2" /><Corner /></>],
  ["视图管理器", <><path d="M8 7h36v40H8z" fill="#fff" stroke="#777" strokeWidth="3" /><path d="M8 17h36M8 27h36M8 37h36M18 7v40" stroke="#8a8e8f" strokeWidth="2.500" /><path d="M25 32h8l3-5h10l3 5h6v21H25z" fill="#3e4344" /><circle cx="41" cy="42" r="6" fill="#ccc" stroke="#111" strokeWidth="2" /></>],
  ["透视图", <><path d="M8 16l36-10h7v30L32 54 8 42z" fill="#b9e6f7" stroke="#3f8fb2" strokeWidth="2.500" /><path d="M8 16l24 6L51 6M32 22v32M18 14v26l26 2M44 8v32" stroke="#67a6c2" strokeWidth="2.500" /></>],
  ["基准显示", <><path d="M4 6l11 10M15 6L4 16M34 4l-6 12M24 24l-7 14M15 42l-5 10M36 20v16h14M36 36L24 50" stroke={color.brown} strokeWidth="4" /><path d="M44 30l8 6-8 6z" fill={color.brown} /><Corner /></>],
  ["旋转中心", <><path d="M12 16l16 14h22M28 30L14 44" stroke="#555" strokeWidth="4" /><circle cx="13" cy="15" r="7" fill="#4fa05a" /><circle cx="47" cy="30" r="7" fill="#cf5f5f" /><circle cx="14" cy="46" r="6.500" fill="#3e8fb5" /></>],
  ["注释显示", <><path d="M3 7h26v17H3z" fill="#fdeecb" stroke="#555" strokeWidth="2.500" /><path d="M30 19h14v8" stroke="#444" strokeWidth="3" /><path d="M37 24h14l-7 9z" fill="#444" /><path d="M22 43q14-14 30 0-16 13-30 0z" fill="#fff" stroke="#444" strokeWidth="3" /><circle cx="37" cy="43" r="6" fill="#444" /><Corner /></>],
  ["平整预览", <><path d="M8 14l8-7h28v14h5v20H8z" fill="#e4fadd" stroke="#3f9c3d" strokeWidth="3" /><path d="M14 20h26v14" stroke="#3f9c3d" strokeWidth="3" strokeDasharray="3 3" /><circle cx="23" cy="46" r="7" fill="#fff" stroke="#444" strokeWidth="3" /><circle cx="43" cy="46" r="7" fill="#fff" stroke="#444" strokeWidth="3" /><path d="M18 40l6-10M48 40l-4-10" stroke="#444" strokeWidth="3" /></>],
  ["仿真", <><path d="M29 10l21 38H8z" stroke="#b4b7b8" strokeWidth="7" strokeLinejoin="round" /><path d="M29 22l10 20H19z" stroke="#d2d4d5" strokeWidth="3" /><circle cx="43" cy="42" r="10" fill="#e4e5e6" stroke="#adb0b1" strokeWidth="2.500" /><path d="M40 36l8 6-8 6z" fill="#adb0b1" /></>],
  ["暂停", <path d="M14 9h12v34H14zM34 9h12v34H34z" fill="#a3a7a8" />],
  ["结束", <><path d="M5 9h49v34H5z" fill="#c7cacb" /><path d="M5 12h16q10 14 0 28H5q12-2 12-14T5 12z" fill="#e9ebec" /><path d="M5 37h30V43H5z" fill="#adb0b1" /></>],
];

/* status icons */
const IconGlobe = () => (
  <Icon w={18} box="114 66 54 54">
    <circle cx="141" cy="94" r="20" fill="#62b4dc" />
    <path d="M130 78q10-6 14 4t-10 10-6 12q-8-6-6-16zM146 96q10-8 14 0-4 14-14 14-4-6 0-14z" fill="#2f86b3" />
    <ellipse cx="141" cy="93" rx="29" ry="13" transform="rotate(-43 141 93)" stroke="#666b6c" strokeWidth="3" />
  </Icon>
);
const IconScreen = () => (
  <Icon w={16} box="195 69 48 48">
    <defs>
      <linearGradient id="screen" x1="0" y1="0" x2="0" y2="1">
        <stop offset="0" stopColor="#fff" />
        <stop offset="1" stopColor="#bcd0dc" />
      </linearGradient>
    </defs>
    <path d="M197 71h44v44h-44z" fill="url(#screen)" stroke="#2d7798" strokeWidth="3.500" />
  </Icon>
);
const IconLayers = () => (
  <Icon box="84 303 48 48">
    <path d="M86 322h22" stroke="#5d9a58" strokeWidth="4" />
    <path d="M86 319l10-15h22l-9 15z" fill="#b5eda3" stroke="#4f9153" strokeWidth="2.500" />
    <path d="M100 344l9-15h22v5l-9 15h-22z" fill="#c9cccc" stroke="#808484" strokeWidth="3" />
  </Icon>
);
const IconRegenStatus = () => (
  <Icon box="356 303 48 48">
    <Cube x={359} y={326} s={22} face="#f4fcff" edge="#3aa4cf" />
    <CycleArrows x={374} y={305} s={0.6} />
  </Icon>
);
const IconBinoculars = () => (
  <Icon w={18} box="441 300 54 54">
    <path d="M452 306h10v10h10v-10h10l10 26v18h-18v-16h-14v16h-18v-18z" fill="#2f3334" />
    <path d="M451 324l-4 22M487 324l3 22M458 312v14" stroke="#8d9192" strokeWidth="4" />
    <path d="M463 318h8v10h-8z" fill="#6b7071" />
  </Icon>
);
const IconGrip = () => (
  <svg width="13" height="13" viewBox="0 0 13 13" aria-hidden="true">
    <path d="M0 13L13 0M4 13l9-9M8 13l5-5" stroke="#b5b9ba" strokeWidth="1.200" />
  </svg>
);

/* ---------- 3D model ---------- */

const Model = () => (
  <ModelSvg viewBox="288 174 1552 827" role="img" aria-label="0003.PRT">
    <defs>
      <linearGradient id="shade" gradientUnits="userSpaceOnUse" x1="722" y1="370" x2="1256" y2="283">
        <stop offset="0" stopColor="#919191" />
        <stop offset=".08" stopColor="#959595" />
        <stop offset=".2" stopColor="#9d9d9d" />
        <stop offset=".35" stopColor="#a5a5a5" />
        <stop offset=".55" stopColor="#acacac" />
        <stop offset=".75" stopColor="#afafaf" />
        <stop offset=".9" stopColor="#b0b0b0" />
        <stop offset=".97" stopColor="#aaaaaa" />
        <stop offset="1" stopColor="#a4a4a4" />
      </linearGradient>
    </defs>
    {/* sheared end faces */}
    <path d="M718 359L726 366 782 706 778 707 775 703 772 695z" fill="#a9a9a9" />
    <path d="M1294 544l21-5 56 337-17 4-4-2z" fill="#919191" />
    {/* upper edge of the sheet */}
    <path
      d="M718 359C776 344 838 334 900 334C1082 334 1256 404 1315 539L1298 543L1280 530C1200 400 1084 349 912 349C848 349 784 356 722 370z"
      fill="#dfdfdf"
    />
    {/* inner surface */}
    <path
      d="M722 370C784 353 848 346 912 346C1084 346 1246 418 1298 543L1354 880C1302 755 1140 683 968 683C904 683 840 690 778 707z"
      fill="url(#shade)"
    />
    <path d="M718 359L722 370 778 707" stroke="#858585" fill="none" />
  </ModelSvg>
);

/* ---------- content ---------- */

type Small = { label: string; icon: React.ReactNode; caret?: boolean; off?: boolean };
type Big = { label: string; icon: React.ReactNode; caret?: boolean };
type RibbonGroup = { label: string; big?: Big[]; small?: Small[] };

const groups: RibbonGroup[] = [
  {
    label: "操作",
    big: [{ label: "重新生成", icon: <IconRegen />, caret: true }],
    small: [
      { label: "复制", icon: <IconCopy />, off: true },
      { label: "粘贴", icon: <IconPaste />, off: true, caret: true },
      { label: "删除", icon: <IconDelete />, off: true, caret: true },
    ],
  },
  {
    label: "获取数据",
    small: [
      { label: "用户定义特征", icon: <IconUserFeature /> },
      { label: "复制几何", icon: <IconCopyGeometry /> },
      { label: "合并/继承", icon: <IconMerge /> },
    ],
  },
  {
    label: "基准",
    big: [{ label: "平面", icon: <IconPlaneBig /> }],
    small: [
      { label: "草绘", icon: <IconSketch /> },
      { label: "轴", icon: <IconAxis /> },
      { label: "坐标系", icon: <IconCsys /> },
    ],
  },
  {
    label: "壁",
    big: [
      { label: "平整", icon: <IconFlat /> },
      { label: "法兰", icon: <IconFlange /> },
    ],
    small: [
      { label: "拉伸", icon: <IconExtrude /> },
      { label: "平面", icon: <IconPlanar /> },
      { label: "边界混合", icon: <IconBlend /> },
    ],
  },
  {
    label: "工程",
    big: [
      { label: "拉伸切口", icon: <IconCut /> },
      { label: "成型", icon: <IconForm />, caret: true },
      { label: "扯裂", icon: <IconRip />, caret: true },
      { label: "转换", icon: <IconConvert /> },
    ],
  },
  {
    label: "折弯",
    big: [{ label: "展平", icon: <IconUnbend />, caret: true }],
    small: [
      { label: "折弯", icon: <IconBend />, caret: true },
      { label: "折回", icon: <IconBendBack /> },
      { label: "平整形态", icon: <IconFlatState />, caret: true },
    ],
  },
  {
    label: "编辑",
    small: [
      { label: "偏移", icon: <IconOffset /> },
      { label: "延伸", icon: <IconExtend /> },
      { label: "联接", icon: <IconJoin /> },
    ],
  },
  { label: "模型意图", big: [{ label: "族表", icon: <IconFamilyTable /> }] },
];

const tabs = ["模型", "分析", "实时仿真", "注释", "工具", "视图", "柔性建模", "应用程序"];

const treeItems: { label: string; icon: React.ReactNode; expand?: boolean }[] = [
  { label: "材料", icon: <IconMaterial />, expand: true },
  { label: "主体 (1)", icon: <IconBodies />, expand: true },
  { label: "DEFAULT_CSYS", icon: <IconCsys /> },
  { label: "RIGHT", icon: <IconPlaneSmall /> },
  { label: "TOP", icon: <IconPlaneSmall /> },
  { label: "FRONT", icon: <IconPlaneSmall /> },
  { label: "导入特征 标识46", icon: <IconImport /> },
  { label: "转换(第一个壁)", icon: <IconConvertSmall /> },
  { label: "曲面扯裂 1", icon: <IconSurfaceRip /> },
  { label: "曲面扯裂 2", icon: <IconSurfaceRip /> },
];

const quickTools: [string, React.ReactNode, boolean?][] = [
  ["新建", <IconNew />],
  ["打开", <IconOpen />],
  ["保存", <IconSave />],
  ["撤消", <IconUndo />],
  ["撤消列表", <Caret fill="#a9adae" />, true],
  ["重做", <IconUndo flip />],
  ["重做列表", <Caret fill="#a9adae" />, true],
  ["重新生成", <IconRegenSmall />],
  ["窗口", <IconWindows />],
  ["窗口列表", <Caret />, true],
  ["尺寸", <IconDimension />],
  ["移动", <IconCubeArrows />],
  ["复制特征", <IconCopyFeature />],
  ["关闭窗口", <IconCloseWindow />],
];

export default function App() {
  return (
    <>
      <GlobalStyle />
      <Window>
        <TitleBar>
          <QuickAccess>
            <Brand>
              <IconLogo />
              <span>
                creo<sup>•</sup>
              </span>
            </Brand>
            <Rule $height={24} />
            <QuickTools>
              {quickTools.map(([name, icon, narrow]) => (
                <QuickButton key={name} aria-label={name} $narrow={narrow}>
                  {icon}
                </QuickButton>
              ))}
            </QuickTools>
            <Rule $height={24} />
            <QuickButton aria-label="自定义">
              <IconCustomize />
            </QuickButton>
          </QuickAccess>
          <Title>0003 (活动的) C:\Users\Administrator\Desktop\0003.prt.1 - Creo Parametric</Title>
          <WindowControls>
            <ControlButton aria-label="最小化">
              <svg width="10" height="10" viewBox="0 0 10 10"><path d="M0 7h9v2H0z" fill="#666b6c" /></svg>
            </ControlButton>
            <ControlButton aria-label="最大化">
              <svg width="10" height="10" viewBox="0 0 10 10"><path d="M0 0h10v9H0zM1 3v5h8V3z" fill="#666b6c" fillRule="evenodd" /></svg>
            </ControlButton>
            <ControlButton aria-label="关闭">
              <svg width="9" height="9" viewBox="0 0 9 9"><path d="M0.500 0.500l8 8M8.500 0.500l-8 8" stroke="#666b6c" strokeWidth="2" /></svg>
            </ControlButton>
          </WindowControls>
        </TitleBar>

        <TabBar>
          <RibbonTab $kind="file">文件</RibbonTab>
          <RibbonTab $kind="active">钣金件</RibbonTab>
          {tabs.map((t) => (
            <RibbonTab key={t}>{t}</RibbonTab>
          ))}
          <TabTools>
            <TabTool aria-label="收起功能区">
              <svg width="11" height="12" viewBox="0 0 11 12"><path d="M5.500 0L11 6H8L5.500 3.500 3 6H0z" fill="#fff" /></svg>
            </TabTool>
            <TabTool aria-label="命令搜索">
              <svg width="15" height="15" viewBox="0 0 15 15"><path d="M6 9L1 13h6q6 0 7-5" fill="none" stroke="#a9b0b1" /><circle cx="9" cy="6" r="5" fill="#c3cdd0" stroke="#6d7576" /></svg>
            </TabTool>
            <TabTool aria-label="学习">
              <svg width="14" height="14" viewBox="0 0 14 14"><circle cx="7" cy="7" r="7" fill="#33383a" /><path d="M7 2l6 3-6 3-6-3zM3.500 7.500L7 9.500l3.500-2v3L7 12l-3.500-1.500z" fill="#fff" /><path d="M1.500 5v5" stroke="#fff" /></svg>
            </TabTool>
            <TabTool aria-label="学习列表" $narrow>
              <Caret fill="#fff" />
            </TabTool>
            <TabTool aria-label="帮助">
              <svg width="14" height="14" viewBox="0 0 14 14"><circle cx="7" cy="7" r="7" fill="#33383a" /><path d="M4.500 5q0-2.500 2.500-2.500T9.500 4.500Q9.500 6 7 7v1.500M7 10v2" fill="none" stroke="#fff" strokeWidth="2" /></svg>
            </TabTool>
          </TabTools>
        </TabBar>

        <Ribbon>
          {groups.map((g) => (
            <Group key={g.label}>
              <GroupBody>
                {g.big?.map((b) => (
                  <BigButton key={b.label}>
                    {b.icon}
                    <span>{b.label}</span>
                    {b.caret && <Caret />}
                  </BigButton>
                ))}
                {g.small && (
                  <SmallColumn>
                    {g.small.map((s) => (
                      <SmallButton key={s.label} $off={s.off}>
                        {s.icon}
                        <span>{s.label}</span>
                        {s.caret && <Caret fill={s.off ? "#a9adae" : undefined} />}
                      </SmallButton>
                    ))}
                  </SmallColumn>
                )}
              </GroupBody>
              <GroupLabel>
                {g.label}
                <Caret />
              </GroupLabel>
            </Group>
          ))}
        </Ribbon>

        <WorkArea>
          <SidePanel>
            <PanelTabs>
              <PanelTab $active>
                <IconTree />
                模型树
              </PanelTab>
              <PanelTab>
                <IconFolders />
                文件夹浏览器
              </PanelTab>
              <PanelTab>
                <IconFavorite />
                收藏夹
              </PanelTab>
            </PanelTabs>
            <PanelHeader>
              <h2>模型树</h2>
              <PanelTool aria-label="工具" $width={24}><IconTools /></PanelTool>
              <PanelTool aria-label="工具列表" $width={18}><Caret /></PanelTool>
              <PanelTool aria-label="设置" $width={24}><IconSettings /></PanelTool>
              <PanelTool aria-label="设置列表" $width={20}><Caret /></PanelTool>
              <PanelTool aria-label="显示" $width={30}><IconTreeHide /></PanelTool>
            </PanelHeader>
            <FilterRow>
              <IconFunnel />
              <FilterField>
                <input type="text" aria-label="过滤模型树" />
                <PlainButton aria-label="清除"><IconClear /></PlainButton>
              </FilterField>
              <PanelTool aria-label="过滤选项" $width={18}><Caret /></PanelTool>
              <PanelTool aria-label="添加" $width={24}><IconPlus /></PanelTool>
            </FilterRow>
            <TreeList>
              <TreeRow $root>
                <IconPart />
                <span>0003.PRT</span>
              </TreeRow>
              {treeItems.map((item) => (
                <TreeRow key={item.label}>
                  {item.expand ? <IconExpand /> : <span />}
                  {item.icon}
                  <span>{item.label}</span>
                </TreeRow>
              ))}
            </TreeList>
          </SidePanel>

          <Viewport>
            <Model />
            <ViewToolbar role="toolbar">
              {viewTools.map(([name, art]) => (
                <PlainButton key={name} aria-label={name}>
                  <Icon w={20} box="0 0 60 60">{art}</Icon>
                </PlainButton>
              ))}
            </ViewToolbar>
            <Tolerances>
              <div>X.X+-0.1</div>
              <div>X.XX+-0.01</div>
              <div>X.XXX+-0.001</div>
              <div>ANG.+-0.5</div>
            </Tolerances>
          </Viewport>
        </WorkArea>

        <StatusBar>
          <StatusGroup>
            <ViewSwitches>
              <ViewSwitch $pressed aria-label="导航器"><IconTree /></ViewSwitch>
              <ViewSwitch aria-label="浏览器"><IconGlobe /></ViewSwitch>
              <ViewSwitch aria-label="全屏"><IconScreen /></ViewSwitch>
            </ViewSwitches>
            <Rule $height={22} />
          </StatusGroup>
          <StatusGroup>
            <StatusCell $width={93}>
              <IconLayers />
              <CountLabel>
                4
                <SelectBox $width={27} $height={13}>
                  <select aria-label="层" />
                  <Caret />
                </SelectBox>
              </CountLabel>
            </StatusCell>
            <StatusCell $width={25}>
              <IconRegenStatus />
            </StatusCell>
            <Rule $height={26} />
            <SplitButton>
              <PlainButton aria-label="查找"><IconBinoculars /></PlainButton>
              <PlainButton aria-label="查找列表"><Caret /></PlainButton>
            </SplitButton>
            <Rule $height={26} />
            <SelectionFilter>
              <SelectBox $width={177} $height={24} $arrow={16}>
                <select aria-label="选择过滤器">
                  <option>几何</option>
                </select>
                <Caret />
              </SelectBox>
              <IconGrip />
            </SelectionFilter>
          </StatusGroup>
        </StatusBar>

        <Watermark>
          <svg width="58" height="63" viewBox="816 188 174 189" fill="none" aria-hidden="true">
            <ellipse cx="885" cy="258" rx="70" ry="40" transform="rotate(47 885 258)" stroke="#7f9cb4" strokeOpacity=".6" strokeWidth="9" />
            <ellipse cx="942" cy="306" rx="58" ry="36" transform="rotate(-55 942 306)" stroke="#e08088" strokeOpacity=".65" strokeWidth="11" />
            <path d="M848 330q4-34 40-62" stroke="#b9c4ce" strokeOpacity=".6" strokeWidth="7" />
          </svg>
          <WatermarkText>
            <strong>野火论坛</strong>
            <span>www.proewildfire.cn</span>
          </WatermarkText>
        </Watermark>
      </Window>
    </>
  );
}
